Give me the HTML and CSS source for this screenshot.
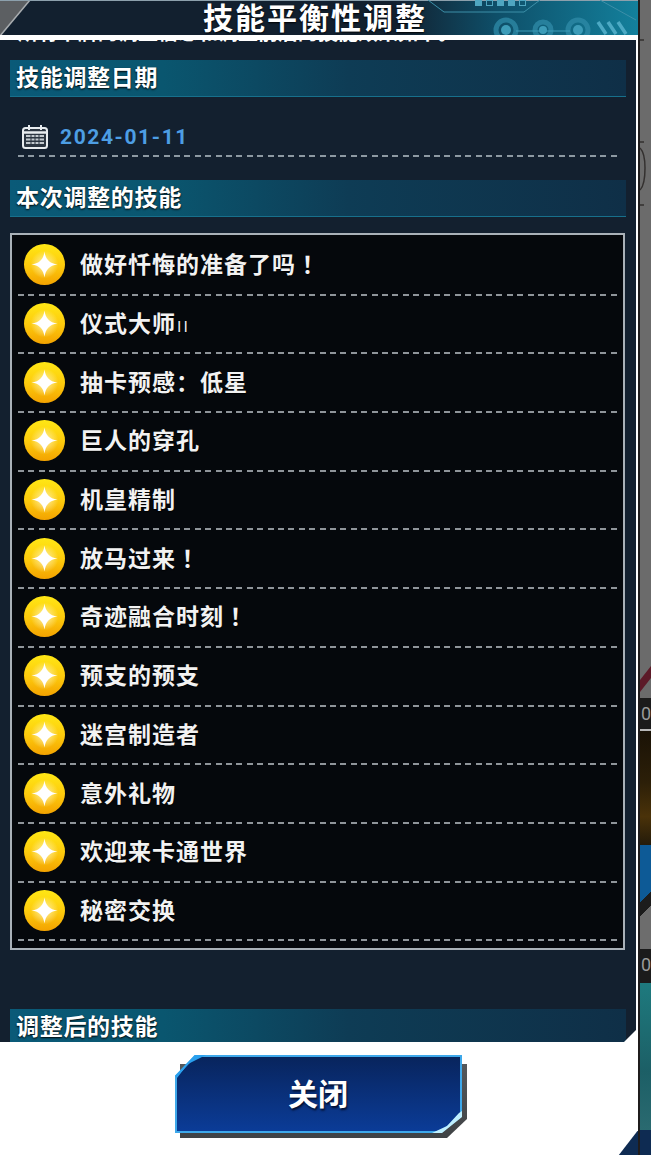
FILE: index.html
```html
<!DOCTYPE html>
<html lang="zh-CN">
<head>
<meta charset="utf-8">
<title>技能平衡性调整</title>
<link rel="stylesheet" href="styles.css">
</head>
<body>
<svg class="defs" width="0" height="0" aria-hidden="true">
  <defs>
    <linearGradient id="coin" x1="0" y1="0" x2="0" y2="1">
      <stop offset="0" stop-color="#ffe715"/>
      <stop offset=".55" stop-color="#fdc90c"/>
      <stop offset="1" stop-color="#f3a200"/>
    </linearGradient>
    <radialGradient id="glow">
      <stop offset="0" stop-color="#fff7c8" stop-opacity=".85"/>
      <stop offset="1" stop-color="#fff7c8" stop-opacity="0"/>
    </radialGradient>
    <symbol id="skill" viewBox="0 0 41 41">
      <circle cx="20.5" cy="20.5" r="20.5" fill="url(#coin)"/>
      <circle cx="20.5" cy="20.5" r="14" fill="url(#glow)"/>
      <path d="M20.5 7.5C21.6 15.500 25.500 19.400 33.500 20.500 25.500 21.600 21.600 25.500 20.500 33.500 19.400 25.500 15.500 21.600 7.500 20.500 15.500 19.400 19.400 15.500 20.500 7.500Z" fill="#fff"/>
    </symbol>
  </defs>
</svg>
<div class="stage">
  <div class="modal">
    <header class="head">
      <svg class="head-art" viewBox="0 0 638 35" width="638" height="35" aria-hidden="true">
        <defs>
          <linearGradient id="headfill" x1="0" y1="0" x2="1" y2="0">
            <stop offset="0" stop-color="#12202f"/>
            <stop offset=".62" stop-color="#12202f"/>
            <stop offset=".78" stop-color="#0e4f69"/>
            <stop offset="1" stop-color="#13809c"/>
          </linearGradient>
        </defs>
        <rect width="638" height="35" fill="url(#headfill)"/>
        <path d="M0 0H30L0 36Z" fill="#5c5f62"/>
        <path d="M30 0L0 36" stroke="#a9adb0" stroke-width="1.5" fill="none"/>
        <path d="M0 .5H638" stroke="#8ca0ac" stroke-width="1"/>
        <path d="M428 0L444 12H524L540 0M600 0L636 20" stroke="#3c8fa8" stroke-width="1" fill="none"/>
        <g fill="#4fa6c0">
          <rect x="475" y="0" width="7" height="6"/>
          <rect x="497" y="0" width="7" height="6"/>
          <rect x="508" y="0" width="7" height="6"/>
        </g>
        <g fill="none" stroke="#4fa6c0" stroke-width="1">
          <rect x="486.500" y=".5" width="6" height="5"/>
          <rect x="519.500" y=".5" width="6" height="5"/>
        </g>
        <g fill="#3d9cb8">
          <circle cx="506" cy="30" r="5"/>
          <circle cx="543" cy="30" r="4"/>
          <circle cx="578" cy="30" r="5"/>
        </g>
        <g fill="none" stroke="#2f8ba8" stroke-width="5" opacity=".75">
          <circle cx="506" cy="30" r="10"/>
          <circle cx="543" cy="30" r="8"/>
          <circle cx="578" cy="30" r="10"/>
        </g>
        <path d="M516 31H570" stroke="#3d9cb8" stroke-width="1"/>
        <path d="M598 22L606 34M608 22L616 34M618 22L626 34" stroke="#4ca9c4" stroke-width="3.500" fill="none"/>
      </svg>
      <h1 class="title">技能平衡性调整</h1>
    </header>
    <div class="frame">
      <main class="panel">
        <div class="cut-line"><p class="cut-text">所有卡牌的调整信息和调整前后的技能效果如下。</p></div>
        <h2 class="bar bar-first">技能调整日期</h2>
        <div class="date-row">
          <svg class="cal" viewBox="0 0 26 24" width="26" height="24" aria-hidden="true">
            <rect x="1" y="3" width="24" height="20" rx="2.500" fill="#2b3540" stroke="#e8ecef" stroke-width="2"/>
            <path d="M1 7.500H25" stroke="#e8ecef" stroke-width="2.500"/>
            <path d="M7 0V5M19 0V5" stroke="#e8ecef" stroke-width="2"/>
            <path d="M4 11H22M4 14.500H22M4 18H22" stroke="#c2c9ce" stroke-width="2"/>
            <path d="M9 9.500V20M13 9.500V20M17 9.500V20" stroke="#2b3540" stroke-width="1"/>
          </svg>
          <span class="date">2024-01-11</span>
        </div>
        <div class="dash dash-date"></div>
        <h2 class="bar">本次调整的技能</h2>
        <ul class="list">
          <li class="row"><svg class="coin" width="41" height="41"><use href="#skill"/></svg><span class="name">做好忏悔的准备了吗<span class="bang" lang="zh-TW">！</span></span></li>
          <li class="row"><svg class="coin" width="41" height="41"><use href="#skill"/></svg><span class="name">仪式大师<small class="roman">II</small></span></li>
          <li class="row"><svg class="coin" width="41" height="41"><use href="#skill"/></svg><span class="name">抽卡预感：低星</span></li>
          <li class="row"><svg class="coin" width="41" height="41"><use href="#skill"/></svg><span class="name">巨人的穿孔</span></li>
          <li class="row"><svg class="coin" width="41" height="41"><use href="#skill"/></svg><span class="name">机皇精制</span></li>
          <li class="row"><svg class="coin" width="41" height="41"><use href="#skill"/></svg><span class="name">放马过来<span class="bang" lang="zh-TW">！</span></span></li>
          <li class="row"><svg class="coin" width="41" height="41"><use href="#skill"/></svg><span class="name">奇迹融合时刻<span class="bang" lang="zh-TW">！</span></span></li>
          <li class="row"><svg class="coin" width="41" height="41"><use href="#skill"/></svg><span class="name">预支的预支</span></li>
          <li class="row"><svg class="coin" width="41" height="41"><use href="#skill"/></svg><span class="name">迷宫制造者</span></li>
          <li class="row"><svg class="coin" width="41" height="41"><use href="#skill"/></svg><span class="name">意外礼物</span></li>
          <li class="row"><svg class="coin" width="41" height="41"><use href="#skill"/></svg><span class="name">欢迎来卡通世界</span></li>
          <li class="row"><svg class="coin" width="41" height="41"><use href="#skill"/></svg><span class="name">秘密交换</span></li>
        </ul>
        <h2 class="bar bar-last">调整后的技能</h2>
      </main>
      <footer class="foot">
        <button class="close" type="button">
          <svg class="close-art" viewBox="0 0 296 86" width="296" height="86" aria-hidden="true">
            <defs>
              <linearGradient id="btn" x1="0" y1="0" x2="0" y2="1">
                <stop offset="0" stop-color="#08245c"/>
                <stop offset="1" stop-color="#0b3c98"/>
              </linearGradient>
              <linearGradient id="btnshade" x1="0" y1="0" x2="0" y2="1">
                <stop offset="0" stop-color="#55585b"/>
                <stop offset="1" stop-color="#3f4245"/>
              </linearGradient>
            </defs>
            <path d="M5 9H292V64L272 83H5Z" fill="url(#btnshade)"/>
            <path d="M1 21L20 1H286V61L266 77H1Z" fill="url(#btn)" stroke="#3ea8ea" stroke-width="2"/>
            <path d="M0 21L20 0H31L13 9 2 23Z" fill="#2aa0ee"/>
            <path d="M287 56V62L267 78H257L272 71 284 58Z" fill="#bff0ff"/>
          </svg>
          <span class="close-label">关闭</span>
        </button>
      </footer>
    </div>
  </div>
  <aside class="side" aria-hidden="true">
    <div class="side-a"><svg width="11" height="698" viewBox="0 0 11 698"><path d="M0 148C4 152 5 158 5 168 5 178 4 186 0 190M0 40H4M0 142H4M0 205H4" fill="none" stroke="#33302f" stroke-width="1.500"/><path d="M0 680L11 666V678L0 692Z" fill="#5c1a28"/></svg></div>
    <div class="side-num">0</div>
    <div class="side-brown"></div>
    <div class="side-card"></div>
    <div class="side-num side-num-2">0</div>
    <div class="side-teal"></div>
    <div class="side-navy"></div>
  </aside>
</div>
</body>
</html>
```
FILE: styles.css
```css
* { box-sizing: border-box; }
html, body { margin: 0; padding: 0; }
body {
  width: 651px;
  height: 1155px;
  overflow: hidden;
  background: #6b6b6b;
  font-family: "Noto Sans CJK SC", "Noto Sans", sans-serif;
  color: #fff;
}
.defs { position: absolute; }
.stage { display: flex; width: 651px; height: 1155px; }

/* modal */
.modal {
  width: 638px;
  flex: none;
  display: flex;
  flex-direction: column;
  background: #0e2b52;
}
.head { position: relative; height: 35px; flex: none; display: flex; justify-content: center; align-items: flex-start; }
.head-art { position: absolute; left: 0; top: 0; }
.title {
  position: relative;
  margin: 0 0 0 -8px;
  font-size: 30px;
  line-height: 33px;
  letter-spacing: 2px;
  font-weight: 700;
  white-space: nowrap;
  text-shadow: 0 1px 2px #000;
}
.frame { flex: 1; display: flex; flex-direction: column; min-height: 0; }
.panel {
  height: 1007px;
  flex: none;
  overflow: hidden;
  background: #13202f;
  border-top: 5px solid #fff;
  border-right: 2px solid #fff;
  position: relative;
}
.panel::after {
  content: "";
  position: absolute;
  right: 0;
  bottom: 0;
  width: 12px;
  height: 12px;
  background: #fff;
  clip-path: polygon(100% 0, 100% 100%, 0 100%);
}
.cut-line { height: 4px; overflow: hidden; display: flex; align-items: flex-end; padding-left: 18px; }
.cut-text { margin: 0; font-size: 20px; line-height: 24px; font-weight: 700; letter-spacing: 0; white-space: nowrap; flex: none; }

.bar {
  margin: 0 10px 0 10px;
  height: 37px;
  padding-left: 6px;
  font-size: 23px;
  line-height: 33px;
  font-weight: 700;
  letter-spacing: .7px;
  white-space: nowrap;
  background: linear-gradient(90deg, #0a5a78 0%, #0a566f 25%, #0e3c55 55%, #0f2f47 100%);
  border-bottom: 1px solid #17708c;
  text-shadow: 0 1px 2px #000;
}
.bar-first { margin-top: 16px; }
.bar-last { margin-top: 59px; }

.date-row { height: 58px; display: flex; align-items: center; padding: 21px 0 0 22px; gap: 12px; }
.date {
  font-family: Roboto, "Liberation Sans", sans-serif;
  font-size: 21px;
  line-height: 28px;
  font-weight: 700;
  letter-spacing: 1.6px;
  color: #4d9ee4;
}
.dash {
  height: 2px;
  background: repeating-linear-gradient(90deg, #8d99a2 0 6px, transparent 6px 10.4px);
}
.dash-date { margin: 0 18px 23px 18px; }

.list {
  margin: 16px 11px 0 10px;
  padding: 2px 5px 7px 6px;
  list-style: none;
  height: 717px;
  background: #05080c;
  border: 2px solid #a9b1b8;
}
.row {
  height: 58.700px;
  display: flex;
  align-items: center;
  gap: 15px;
  padding-left: 6px;
  padding-bottom: 3px;
  font-size: 23px;
  font-weight: 700;
  letter-spacing: 1px;
  white-space: nowrap;
  color: #f2f2f2;
  background: repeating-linear-gradient(90deg, #8f959a 0 6px, transparent 6px 10.4px) left bottom / 100% 2px no-repeat;
}
.coin { flex: none; display: block; }
.name { margin-bottom: 3px; text-shadow: 0 1px 1px #000; }
.bang { font-family: "Noto Sans CJK TC", sans-serif; }
.roman { font-size: 15px; font-weight: 400; letter-spacing: 2px; margin-left: 1px; }

/* footer */
.foot {
  flex: 1;
  min-height: 0;
  display: flex;
  justify-content: center;
  align-items: flex-start;
  padding: 13px 2px 0 0;
  background: #fff;
  clip-path: polygon(0 0, 100% 0, 100% 78%, 97% 100%, 0 100%);
}
.close {
  position: relative;
  width: 287px;
  height: 77px;
  padding: 0 0 4px;
  border: 0;
  background: none;
  color: #fff;
  font-family: inherit;
  display: flex;
  align-items: center;
  justify-content: center;
}
.close-art { position: absolute; left: 0; top: 0; }
.close-label {
  position: relative;
  font-size: 30px;
  font-weight: 700;
  line-height: 40px;
  text-shadow: 1px 2px 2px #031030;
}

/* strip of the page behind the modal */
.side {
  flex: 1;
  display: flex;
  flex-direction: column;
  background: #6b6b6b;
  border-left: 2px solid #1f1c1c;
  overflow: hidden;
}
.side-a { height: 698px; flex: none; }
.side-a svg { display: block; }
.side-num {
  height: 33px;
  flex: none;
  background: #1b1b1b;
  border-bottom: 2px solid #b8b8b8;
  color: #9a9a9a;
  font-family: Roboto, sans-serif;
  font-size: 18px;
  line-height: 31px;
  padding-left: 1px;
}
.side-num-2 { height: 34px; border-bottom: 0; }
.side-brown { height: 114px; flex: none; background: linear-gradient(#1a1206 0%, #2c1f08 45%, #4a3209 75%, #241b0a 100%); }
.side-card { height: 104px; flex: none; background: linear-gradient(135deg, #0d5a96 0 50%, #1c1c1c 50% 62%, #6d6d6d 62%); }
.side-teal { flex: 1; background: linear-gradient(#1e7a7e, #1c5f66 60%, #2a6a70 100%); }
.side-navy { height: 25px; flex: none; background: #0e2b52; }
```
